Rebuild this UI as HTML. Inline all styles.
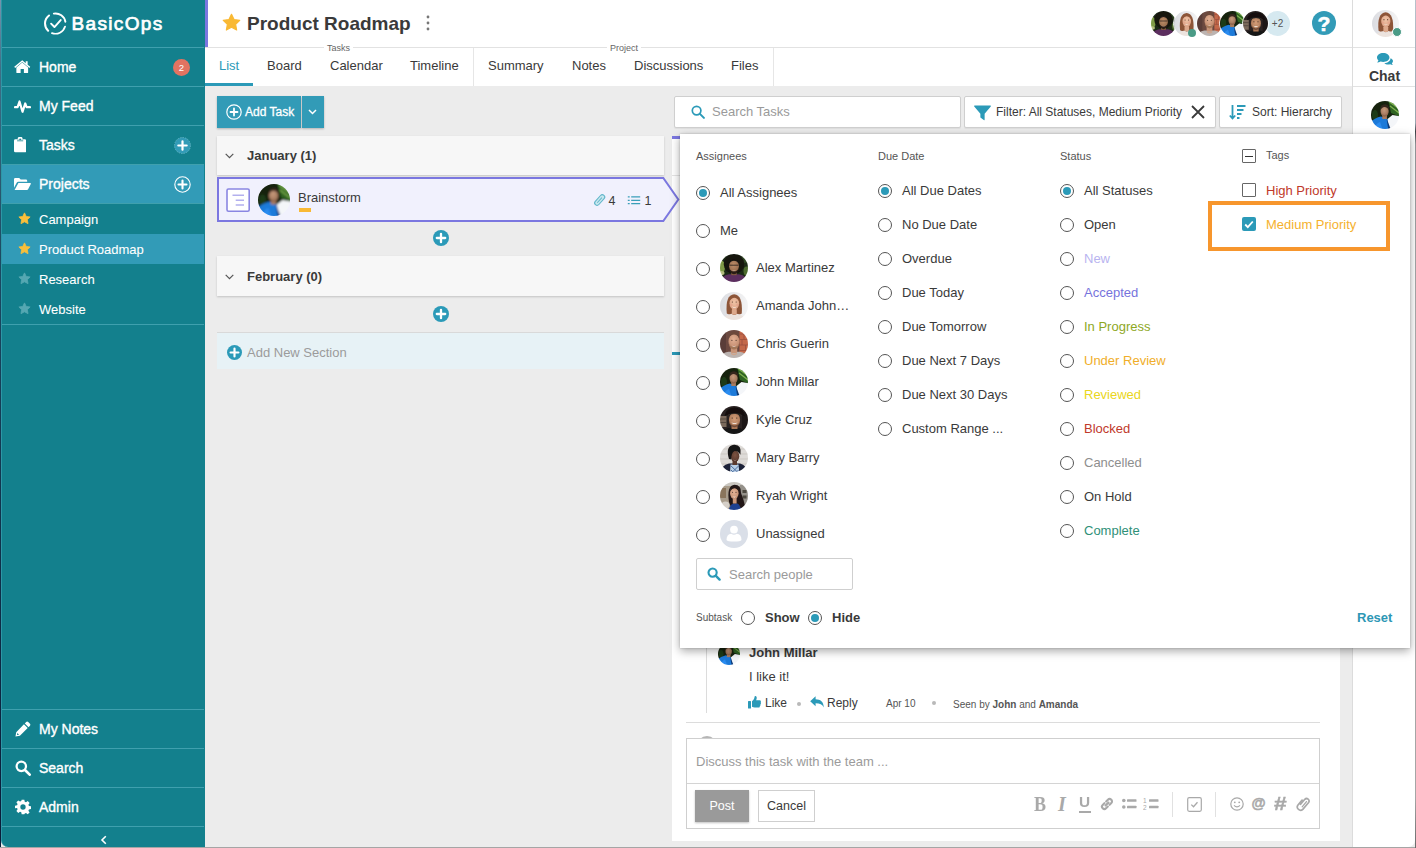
<!DOCTYPE html>
<html lang="en">
<head>
<meta charset="utf-8">
<title>BasicOps - Product Roadmap</title>
<style>
*{box-sizing:border-box;margin:0;padding:0}
html,body{width:1416px;height:848px;overflow:hidden;background:#ececec;font-family:"Liberation Sans",Arial,Helvetica,sans-serif;color:#3c3c3c;font-size:13px}
.abs{position:absolute}
#app{position:absolute;left:0;top:0;width:1416px;height:848px;overflow:hidden;background:#ececec}
/* ---------- sidebar ---------- */
#side{position:absolute;left:1px;top:0;width:204px;height:847px;background:#13808d;border-left:1px solid #2d97a6;border-bottom-left-radius:7px;color:#fff}
#side .row{position:absolute;left:0;width:202px;height:39px;border-top:1px solid #3fa0ae;font-size:14px;line-height:38px;padding-left:37px;-webkit-text-stroke:.35px #fff}
#side .row svg{position:absolute;left:12px;top:10px}
#side .row.act{background:#329bb7}
#side .sub{position:absolute;left:0;width:202px;height:30px;font-size:13px;line-height:32px;padding-left:37px;-webkit-text-stroke:.08px #fff}
#side .sub.act{background:#329bb7}
#side .sub svg{position:absolute;left:16px;top:8px;width:13px;height:13px}
#side .hr{position:absolute;left:0;width:202px;height:1px;background:#3fa0ae}
/* ---------- header ---------- */
#head{position:absolute;left:205px;top:0;width:1147px;height:47px;background:#fff;border-left:3px solid #7b77e0}
#tabs{position:absolute;left:205px;top:47px;width:1147px;height:39px;background:#fff;border-top:1px solid #e2e2e2}
.tab{position:absolute;top:10px;font-size:13px;line-height:16px;color:#3a3a3a;white-space:nowrap}
.grp{position:absolute;top:-4px;font-size:9px;line-height:9px;color:#666;background:#fff;padding:0 3px}
/* ---------- right column ---------- */
#right{position:absolute;left:1352px;top:0;width:63px;height:847px;background:#fff;border-left:1px solid #dcdcdc;border-bottom-right-radius:7px}
/* ---------- generic ---------- */
.ibox{position:absolute;background:#fff;border:1px solid #cfcfcf;border-radius:2px;height:32px;top:96px;font-size:12px;line-height:31px;white-space:nowrap;box-shadow:0 1px 1px rgba(0,0,0,.06)}
.sec{position:absolute;left:217px;width:447px;background:#f7f7f7;box-shadow:0 1px 2px rgba(0,0,0,.18);font-weight:bold;font-size:13px;color:#3a3a3a}
.plus{position:absolute;width:16px;height:16px}
/* ---------- popup ---------- */
#pop{position:absolute;left:680px;top:134px;width:730px;height:514px;background:#fff;box-shadow:0 3px 9px rgba(0,0,0,.35),0 0 2px rgba(0,0,0,.2)}
.rd{position:absolute;width:14px;height:14px;border:1px solid #555;border-radius:50%;background:#fff}
.rd.on:after{content:"";position:absolute;left:2px;top:2px;width:8px;height:8px;border-radius:50%;background:#2b9ab8}
.lb{position:absolute;font-size:13px;line-height:16px;white-space:nowrap;color:#3a3a3a}
.hd{position:absolute;font-size:11px;line-height:12px;color:#555;white-space:nowrap}
.av{position:absolute;border-radius:50%;overflow:hidden}
.cb{position:absolute;width:14px;height:14px;border:1px solid #666;background:#fff;border-radius:1px}
</style>
</head>
<body>
<div id="app">
<!-- SVG defs -->
<svg width="0" height="0" style="position:absolute">
<defs>
<filter id="bl" x="-10%" y="-10%" width="120%" height="120%"><feGaussianBlur stdDeviation=".7"/></filter>
<filter id="bl2" x="-10%" y="-10%" width="120%" height="120%"><feGaussianBlur stdDeviation=".35"/></filter>
<linearGradient id="gAm" x1="0" x2="1" y1="0" y2="0"><stop offset="0" stop-color="#d9dadf"/><stop offset="1" stop-color="#f6f6f6"/></linearGradient>
<radialGradient id="gF1" cx=".45" cy=".4" r=".7"><stop offset="0" stop-color="#bd8e69"/><stop offset="1" stop-color="#8f6446"/></radialGradient>
<radialGradient id="gF2" cx=".5" cy=".4" r=".7"><stop offset="0" stop-color="#f0c3a6"/><stop offset="1" stop-color="#d99f82"/></radialGradient>
<radialGradient id="gF3" cx=".45" cy=".35" r=".75"><stop offset="0" stop-color="#e3b094"/><stop offset="1" stop-color="#b98164"/></radialGradient>
<radialGradient id="gF4" cx=".45" cy=".4" r=".7"><stop offset="0" stop-color="#c79a7c"/><stop offset="1" stop-color="#94694f"/></radialGradient>
<radialGradient id="gF5" cx=".5" cy=".45" r=".7"><stop offset="0" stop-color="#d49d78"/><stop offset="1" stop-color="#a06f50"/></radialGradient>
<radialGradient id="gF6" cx=".5" cy=".4" r=".7"><stop offset="0" stop-color="#7d5441"/><stop offset="1" stop-color="#50332a"/></radialGradient>
<radialGradient id="gF7" cx=".45" cy=".4" r=".7"><stop offset="0" stop-color="#e6b497"/><stop offset="1" stop-color="#bf8a6d"/></radialGradient>
<symbol id="av-alex" viewBox="0 0 28 28"><g filter="url(#bl)"><rect x="-2" y="-2" width="32" height="32" fill="#1e2a17"/><ellipse cx="1.500" cy="13" rx="3.600" ry="6.500" fill="#7f9b46"/><ellipse cx="1.500" cy="19" rx="3" ry="2" fill="#b4bd80"/><ellipse cx="26.500" cy="17" rx="3" ry="4.500" fill="#4e6b2f"/><ellipse cx="25" cy="5" rx="4" ry="4" fill="#2f4422"/><ellipse cx="14" cy="10" rx="10.300" ry="9.800" fill="#14120f"/><path d="M-1 30Q1 21.500 9 20.300L19 20.300Q27 21.500 29 30z" fill="#5c2e5f"/><rect x="11.300" y="16" width="5.400" height="5.200" fill="#83593f"/><ellipse cx="14" cy="12.300" rx="4.900" ry="6.400" fill="url(#gF1)"/><path d="M9.200 13.500q.6 6.300 4.800 6.800 4.200-.5 4.800-6.800-1.200 3.500-2.800 3.700h-4q-1.600-.2-2.800-3.700z" fill="#2b1e17"/><path d="M11.800 16.100q2.200 1.400 4.400 0-2.200 2.100-4.400 0z" fill="#e9ddd4"/><path d="M9.600 11.200h8.800" stroke="#33261f" stroke-width=".9"/><path d="M9.300 9Q14 4.500 18.700 9 17 5.500 14 5.500T9.300 9z" fill="#14120f"/></g></symbol>
<symbol id="av-amanda" viewBox="0 0 28 28"><g filter="url(#bl)"><rect x="-2" y="-2" width="32" height="32" fill="url(#gAm)"/><path d="M6.800 21.500Q5 3 14.200 2.300 23 3 21.800 21.500l-3 1.500-9 0z" fill="#8d5539"/><path d="M2.500 30q1.500-7.500 9.500-8.300l2.200 2 2.500-2q8 .8 9.300 8.300z" fill="#ece3de"/><rect x="11.800" y="16.500" width="5" height="6.300" rx="1.500" fill="#dda98c"/><ellipse cx="14.300" cy="11.300" rx="4.800" ry="6.400" fill="url(#gF2)"/><path d="M11.800 14.300q2.500 1.900 5 0-2.500 3-5 0z" fill="#fff"/><path d="M9.300 9.500Q10.500 4 14.300 4t5 5.500Q17 5.800 14.300 5.800T9.300 9.500z" fill="#8d5539"/><circle cx="12.400" cy="10" r=".6" fill="#5a3a2c"/><circle cx="16.200" cy="10" r=".6" fill="#5a3a2c"/><ellipse cx="11.300" cy="13" rx="1.200" ry=".9" fill="#e89f8a" opacity=".6"/><ellipse cx="17.300" cy="13" rx="1.200" ry=".9" fill="#e89f8a" opacity=".6"/></g></symbol>
<symbol id="av-chris" viewBox="0 0 28 28"><g filter="url(#bl)"><rect x="-2" y="-2" width="32" height="32" fill="#6c4a41"/><rect x="-2" y="-2" width="8" height="32" fill="#5a3d37"/><rect x="19.500" y="-2" width="11" height="32" fill="#c4684a"/><path d="M19.500 4h10M19.500 9.500h10M19.500 15h10M19.500 20.500h10M24 4v5.500M22 9.500V15M25.500 15v5.500" stroke="#9a4f3c" stroke-width=".8"/><path d="M-1 30q2-7.500 9.500-8.200h11q7.500.7 9.500 8.200z" fill="#bcb4b1"/><rect x="10.800" y="17" width="6.400" height="6" rx="1.500" fill="#c89478"/><path d="M11 22.500q3 2.500 6 0l0 1.500q-3 2.500-6 0z" fill="#cfa58c"/><ellipse cx="14" cy="11.500" rx="5.500" ry="7.500" fill="url(#gF3)"/><path d="M8.700 8Q9.500 1.800 14 1.800T19.300 8Q17.500 4.500 14 4.500T8.700 8z" fill="#6d4a3a"/><path d="M8.800 13q.6 6 5.200 6.500 4.600-.5 5.200-6.500-1.300 3.300-3 3.500h-4.400q-1.700-.2-3-3.500z" fill="#a47759"/><path d="M11.800 15.600q2.200 1.500 4.400 0-2.200 2.400-4.400 0z" fill="#f6eee8"/><circle cx="11.900" cy="10.300" r=".6" fill="#4a342a"/><circle cx="16.100" cy="10.300" r=".6" fill="#4a342a"/></g></symbol>
<symbol id="av-john" viewBox="0 0 28 28"><g filter="url(#bl)"><rect x="-2" y="-2" width="32" height="32" fill="#142410"/><path d="M17 -2h13v18l-10-4z" fill="#2f6323"/><path d="M18.500 1l10 7M21 -1l8 5M19 5l9 7" stroke="#7fb24f" stroke-width="1.300"/><ellipse cx="4" cy="14" rx="3" ry="5" fill="#1d3a17"/><path d="M-2 30V22Q4 16.500 10 15.500l6.500 2.500 3 12z" fill="#1f7ad9"/><path d="M2 30q2-7 7-9l3 9z" fill="#2c8cf0"/><path d="M16.500 18l5-4 8.500 1.500v9L23 30h-4.500z" fill="#f4f6f9"/><path d="M15.500 17.500l2 12.500h3z" fill="#0e3a78"/><rect x="11.300" y="13.500" width="4.600" height="4.500" fill="#a87b60"/><ellipse cx="13.600" cy="10" rx="4.100" ry="5.600" fill="url(#gF4)"/><path d="M9.300 9.500Q9 3.300 13.800 3.300T18 9.500Q16.500 6 13.600 6T9.300 9.500z" fill="#35261d"/><path d="M10 11.500q.8 4 3.600 4.200 2.800-.2 3.600-4.200-1.200 2.500-3.600 2.600-2.400-.1-3.600-2.600z" fill="#8a6048" opacity=".7"/></g></symbol>
<symbol id="av-kyle" viewBox="0 0 28 28"><g filter="url(#bl)"><rect x="-2" y="-2" width="32" height="32" fill="#2a2220"/><rect x="-2" y="10" width="8.500" height="11" fill="#7b6b5c"/><path d="M-2 13h8.500M-2 16.500h8.500" stroke="#4d4138" stroke-width=".8"/><rect x="22" y="6" width="8" height="24" fill="#1d1817"/><path d="M-1 30q3-7 10-8h10q7 1 10 8z" fill="#171312"/><rect x="11.500" y="18" width="6" height="5" fill="#a97553"/><ellipse cx="14.500" cy="13.800" rx="5.600" ry="7.200" fill="url(#gF5)"/><path d="M4.500 10Q6 1.300 15 1.500T25 10.500Q15 5.300 4.500 10z" fill="#121010"/><path d="M8 9.200Q15 5.500 22 9.500" stroke="#3a302c" stroke-width=".7" fill="none"/><path d="M11.300 16.200q3.200 2 6.400 0-3.200 3.800-6.400 0z" fill="#fdf9f5"/><path d="M9.200 15.500q.8 5.500 5.300 5.800 4.500-.3 5.300-5.800-1.500 3.800-5.300 4-3.800-.2-5.300-4z" fill="#5f3f2e" opacity=".8"/><circle cx="12.200" cy="12" r=".6" fill="#2a1d17"/><circle cx="16.800" cy="12" r=".6" fill="#2a1d17"/></g></symbol>
<symbol id="av-mary" viewBox="0 0 28 28"><g filter="url(#bl)"><rect x="-2" y="-2" width="32" height="32" fill="#dedbd8"/><path d="M-2 5h32M-2 10h32M-2 15h32M-2 20h32" stroke="#c6c1bc" stroke-width=".7"/><path d="M0 30q1-9 9-10.500h11q7 1.500 8 10.500z" fill="#1f2238"/><path d="M10.500 20.500h8l1 9.500h-9.500z" fill="#b9cfe6"/><path d="M11 22l7.500 7M18.500 22l-7 7M11 26l4 4M18.500 26l-4 4" stroke="#34588f" stroke-width=".8"/><rect x="12.500" y="16.500" width="4.500" height="4.500" fill="#5c3a2d"/><ellipse cx="15" cy="12.300" rx="4.300" ry="5.700" fill="url(#gF6)"/><path d="M9 15Q5 2 14 .8q8-.5 6.500 10Q18 6.500 14.500 7 11 9 11.300 15.500z" fill="#181413"/><path d="M13.300 15.400q1.700 1.100 3.400 0-1.700 1.700-3.400 0z" fill="#e6dbd4"/></g></symbol>
<symbol id="av-ryah" viewBox="0 0 28 28"><g filter="url(#bl)"><rect x="-2" y="-2" width="32" height="32" fill="#a99d8c"/><rect x="-2" y="-2" width="32" height="6" fill="#c9c6c0"/><rect x="20" y="3" width="10" height="27" fill="#95918a"/><path d="M22.500 8h4v3h-4zM22.500 13.500h4v3h-4z" fill="#4d483f"/><rect x="-2" y="6" width="8" height="10" fill="#8a755c"/><ellipse cx="5.500" cy="23" rx="4" ry="3.500" fill="#d5cfc8"/><path d="M9 20Q6.500 3.500 14.500 2.800 21.500 3 21 11q3 7 4.500 15l-9 2-6-4z" fill="#221917"/><path d="M8.500 30q.5-7 5-8.500h4q3 1.500 4 8.500z" fill="#1f3f90"/><rect x="12.800" y="16" width="3.800" height="5.500" fill="#c99679"/><ellipse cx="14.300" cy="11.300" rx="4.300" ry="5.600" fill="url(#gF7)"/><path d="M10 9.500Q11 4.300 14.500 4.300T19 10Q17 6.300 14.500 6.300T10 9.500z" fill="#221917"/><path d="M12.200 14q2.100 1.700 4.200 0-2.100 2.800-4.200 0z" fill="#fff"/><circle cx="12.600" cy="10.300" r=".55" fill="#3a2a22"/><circle cx="16" cy="10.300" r=".55" fill="#3a2a22"/></g></symbol>
<symbol id="av-none" viewBox="0 0 28 28"><rect width="28" height="28" fill="#dadfe8"/><g filter="url(#bl2)"><circle cx="14" cy="9.600" r="3.900" fill="#fff"/><path d="M6.500 20q0-5.800 4.800-6.300 2.700 1.900 5.400 0 4.800.5 4.800 6.300-1 1.600-7.500 1.600T6.500 20z" fill="#fff"/></g></symbol>
<symbol id="star" viewBox="0 0 24 24"><path d="M12 1.6l3.2 6.6 7.2 1-5.2 5.1 1.3 7.2L12 18.1l-6.500 3.400 1.300-7.200L1.600 9.200l7.200-1z" stroke-linejoin="round" stroke-width="1.5" stroke="currentColor" fill="currentColor"/></symbol>
<symbol id="plusc" viewBox="0 0 16 16"><circle cx="8" cy="8" r="8" fill="#2b9ab8"/><path d="M8 3.800v8.400M3.800 8h8.400" stroke="#fff" stroke-width="2.300" stroke-linecap="round"/></symbol>
</defs>
</svg>

<div class="abs" style="left:0;top:0;width:1px;height:848px;background:linear-gradient(180deg,#7893ad 0,#3f6f86 8%,#1d4a63 30%,#12344d 60%,#0b1b38 100%)"></div>
<!-- SIDEBAR -->
<div id="side">
  <div class="abs" id="logo" style="left:0;top:0;width:203px;height:47px">
    <svg class="abs" style="left:42px;top:11.500px" width="23" height="23" viewBox="0 0 24 24" fill="none" stroke="#fff" stroke-linecap="round">
      <path d="M5.200 3.600A10.600 10.600 0 0 0 4.300 19.600" stroke-width="2.100"/>
      <path d="M10.300 1.700A10.400 10.400 0 0 1 22.300 10.200" stroke-width="2"/>
      <path d="M22 15.200A10.500 10.500 0 0 1 8.300 22" stroke-width="1.800"/>
      <path d="M7.400 12.200l3.500 3.500 6.500-7.300" stroke-width="2" stroke-linejoin="round"/>
    </svg>
    <div class="abs" id="brand" style="left:69.500px;top:10.500px;font-size:19px;line-height:26px;letter-spacing:1.350px;-webkit-text-stroke:.7px #fff;white-space:nowrap">BasicOps</div>
  </div>
  <div class="row" style="top:47px" id="r-home"><svg width="16.500" height="13.500" viewBox="0 0 17 14" style="left:12px;top:11.500px" fill="#fff"><path d="M8.500 2.700L2.400 7.700V13a.5.5 0 0 0 .5.5h3.900V9.400h3.400v4.100h3.900a.5.500 0 0 0 .5-.5V7.700z"/><path d="M8.500.3L.2 7.100l.9 1.100 7.400-6.100 7.400 6.100.9-1.100-2.700-2.200V1.200h-2v2.100z"/></svg>Home<span class="abs" style="left:171px;top:11px;width:17px;height:17px;border-radius:50%;background:#e27361;font-size:9.500px;line-height:17px;text-align:center;-webkit-text-stroke:0">2</span></div>
  <div class="row" style="top:86px" id="r-feed"><svg width="17" height="13" viewBox="0 0 17 13" style="left:12px;top:13px" fill="none" stroke="#fff" stroke-width="2.200" stroke-linejoin="round" stroke-linecap="round"><path d="M1 7.200h2.600l1.900-5.700 3 10.300 2.700-8.300 1.400 3.700h3.400"/></svg>My Feed</div>
  <div class="row" style="top:125px" id="r-tasks"><svg width="12.300" height="15.500" viewBox="0 0 13 16" style="left:12px;top:11px" fill="#fff"><path d="M1.500 2.200h2.300a2.700 2.700 0 0 1 5.400 0h2.300A1.500 1.500 0 0 1 13 3.700v10.800a1.500 1.500 0 0 1-1.500 1.500h-10A1.500 1.500 0 0 1 0 14.500V3.700a1.500 1.500 0 0 1 1.500-1.500zM6.500 1.300a.9.900 0 1 0 0 1.800.9.900 0 0 0 0-1.800z"/><rect x="3.300" y="2.500" width="6.400" height="2" fill="#13808d" opacity=".55"/></svg>Tasks<svg width="17" height="17" viewBox="0 0 17 17" style="left:172px;top:11px"><circle cx="8.500" cy="8.500" r="8" fill="#329bb7" stroke="#6ab7c7" stroke-width=".8" stroke-dasharray="1.500 1"/><path d="M8.500 4.300v8.400M4.300 8.500h8.400" stroke="#fff" stroke-width="2.200" stroke-linecap="round"/></svg></div>
  <div class="row act" style="top:164px" id="r-proj"><svg width="17" height="12" viewBox="0 0 17 12" style="left:12px;top:13px" fill="#fff"><path d="M0 1.300A1.300 1.300 0 0 1 1.300 0h3.900l1.500 1.500h5.200a1.300 1.300 0 0 1 1.300 1.300v1H4.300a1.800 1.800 0 0 0-1.600 1L0 9.700z"/><path d="M4.400 5h11.900a.6.600 0 0 1 .5.900l-2.700 5.300a1.300 1.300 0 0 1-1.200.8H.6z"/></svg>Projects<svg width="17" height="17" viewBox="0 0 17 17" style="left:172px;top:11px"><circle cx="8.500" cy="8.500" r="7.700" fill="none" stroke="#fff" stroke-width="1.100"/><path d="M8.500 4.500v8M4.500 8.500h8" stroke="#fff" stroke-width="2.100" stroke-linecap="round"/></svg></div>
  <div class="hr" style="top:203px"></div>
  <div class="sub" style="top:204px"><svg width="12" height="12" style="color:#f9bf3b"><use href="#star"/></svg>Campaign</div>
  <div class="sub act" style="top:234px"><svg width="12" height="12" style="color:#f9bf3b"><use href="#star"/></svg>Product Roadmap</div>
  <div class="sub" style="top:264px"><svg width="12" height="12" style="color:#55a7b2"><use href="#star"/></svg>Research</div>
  <div class="sub" style="top:294px"><svg width="12" height="12" style="color:#55a7b2"><use href="#star"/></svg>Website</div>
  <div class="hr" style="top:324px"></div>
  <div class="row" style="top:709px" id="r-notes"><svg width="16" height="16" viewBox="0 0 17 17" style="left:13px;top:11px" fill="#fff"><path d="M11.900 1.100a1.500 1.500 0 0 1 2.100 0l1.900 1.900a1.500 1.500 0 0 1 0 2.100l-1.500 1.500-4-4z"/><path d="M9.500 3.500l4 4-8.300 8.300-4.700.8.800-4.700zM2.500 12.700l-.4 2.200 2.200-.4z" fill-rule="evenodd"/></svg>My Notes</div>
  <div class="row" style="top:748px" id="r-search"><svg width="16" height="16" viewBox="0 0 17 17" style="left:13px;top:11px" fill="none" stroke="#fff"><circle cx="6.700" cy="6.700" r="5" stroke-width="2.400"/><path d="M10.600 10.600l5 5" stroke-width="2.800" stroke-linecap="round"/></svg>Search</div>
  <div class="row" style="top:787px" id="r-admin"><svg width="16" height="16" viewBox="0 0 24 24" style="left:13px;top:11px" fill="#fff"><path fill-rule="evenodd" d="M10 1h4l.6 3.100 1.900.8 2.600-1.800 2.800 2.800-1.800 2.600.8 1.900 3.100.6v4l-3.100.6-.8 1.900 1.800 2.600-2.800 2.800-2.600-1.800-1.900.8L14 23h-4l-.6-3.100-1.900-.8-2.600 1.800-2.800-2.800 1.800-2.600-.8-1.900L0 14v-4l3.100-.6.800-1.900-1.800-2.600 2.800-2.800 2.600 1.800 1.900-.8zM12 8a4 4 0 1 0 0 8 4 4 0 0 0 0-8z"/></svg>Admin</div>
  <div class="hr" style="top:826px"></div>
  <svg class="abs" style="left:98px;top:835px" width="8" height="10" viewBox="0 0 8 10" fill="none" stroke="#fff" stroke-width="1.600"><path d="M5.800 1.200L2 5l3.800 3.800"/></svg>
</div>

<!-- HEADER -->
<div id="head">
  <svg class="abs" style="left:14px;top:13px;color:#f9b934" width="19" height="19"><use href="#star"/></svg>
  <div class="av" style="left:941.5px;top:10px;width:27px;height:27px;border:1px solid #fff;z-index:1"><svg width="25" height="25" viewBox="0 0 28 28"><use href="#av-alex"/></svg></div>
  <div class="av" style="left:964.5px;top:10px;width:27px;height:27px;border:1px solid #fff;z-index:2"><svg width="25" height="25" viewBox="0 0 28 28"><use href="#av-amanda"/></svg></div>
  <div class="av" style="left:987.5px;top:10px;width:27px;height:27px;border:1px solid #fff;z-index:3"><svg width="25" height="25" viewBox="0 0 28 28"><use href="#av-chris"/></svg></div>
  <div class="av" style="left:1010.5px;top:10px;width:27px;height:27px;border:1px solid #fff;z-index:4"><svg width="25" height="25" viewBox="0 0 28 28"><use href="#av-john"/></svg></div>
  <div class="av" style="left:1033.5px;top:10px;width:27px;height:27px;border:1px solid #fff;z-index:5"><svg width="25" height="25" viewBox="0 0 28 28"><use href="#av-kyle"/></svg></div>
  <div class="abs" style="left:1057.0px;top:11px;width:25px;height:25px;border-radius:50%;background:#d6e9f0;color:#555;font-size:10px;line-height:26px;text-align:center">+2</div>
  <div class="abs" style="left:980px;top:29px;width:8px;height:8px;border-radius:50%;background:#4a9b86;z-index:9"></div>
  <div class="abs" style="left:1104px;top:11px;width:24px;height:24px;border-radius:50%;background:#329bb7;color:#fff;font-size:21px;line-height:25px;-webkit-text-stroke:.6px #fff;font-weight:bold;text-align:center">?</div>
  <svg class="abs" style="left:217.500px;top:15px" width="4" height="16" viewBox="0 0 4 16" fill="#777"><circle cx="2" cy="2" r="1.400"/><circle cx="2" cy="8" r="1.400"/><circle cx="2" cy="14" r="1.400"/></svg>
  <div class="abs" id="title" style="left:39px;top:12px;font-size:19px;line-height:24px;font-weight:bold;color:#3a3a3a;white-space:nowrap">Product Roadmap</div>
</div>
<div id="tabs">
  <div class="grp" style="left:119px">Tasks</div>
  <div class="grp" style="left:402px">Project</div>
  <div class="tab" style="left:14px;color:#2b9ab8">List</div>
  <div class="tab" style="left:62px">Board</div>
  <div class="tab" style="left:125px">Calendar</div>
  <div class="tab" style="left:205px">Timeline</div>
  <div class="tab" style="left:283px">Summary</div>
  <div class="tab" style="left:367px">Notes</div>
  <div class="tab" style="left:429px">Discussions</div>
  <div class="tab" style="left:526px">Files</div>
  <div class="abs" style="left:0;top:35px;width:48px;height:3px;background:#2b9ab8"></div>
  <div class="abs" style="left:268px;top:0;width:1px;height:38px;background:#e6e6e6"></div>
  <div class="abs" style="left:568px;top:0;width:1px;height:38px;background:#e6e6e6"></div>
</div>

<!-- RIGHT COLUMN -->
<div id="right">
  <div class="av" style="left:19px;top:10px;width:27px;height:27px"><svg width="27" height="27" viewBox="0 0 28 28"><use href="#av-amanda"/></svg></div>
  <div class="abs" style="left:39px;top:27px;width:10px;height:10px;border-radius:50%;background:#4a9b86;border:1px solid #fff"></div>
  <div class="abs" style="left:0;top:47px;width:63px;height:1px;background:#e2e2e2"></div>
  <svg class="abs" style="left:24px;top:53px" width="16" height="12.500" viewBox="0 0 18 14" fill="#2b9ab8"><path d="M7 0C3.100 0 0 2.200 0 5c0 1.200.6 2.300 1.600 3.200C1.300 9.200.7 10 .1 10.600c1.400 0 2.800-.4 3.900-1.100 1 .3 2 .5 3 .5 3.900 0 7-2.200 7-5S10.900 0 7 0z"/><path d="M15.200 5.800c0 2.900-3 5.300-7 5.600 1 .9 2.600 1.500 4.300 1.500.8 0 1.600-.1 2.300-.4 1 .6 2 .9 3.100 1-.5-.5-.9-1.200-1.200-2 .8-.7 1.300-1.600 1.300-2.500 0-1.300-1.100-2.500-2.800-3.200z"/></svg>
  <div class="abs" style="left:0;top:67px;width:63px;text-align:center;font-size:14px;line-height:18px;font-weight:bold;color:#3a3a3a">Chat</div>
  <div class="abs" style="left:0;top:86px;width:63px;height:1px;background:#e2e2e2"></div>
  <div class="av" style="left:18px;top:101px;width:28px;height:28px"><svg width="28" height="28" viewBox="0 0 28 28"><use href="#av-john"/></svg></div>
</div>

<!-- MAIN placeholder -->
<div id="main">
  <!-- Add Task -->
  <div class="abs" style="left:217px;top:96px;width:84px;height:32px;background:#329bb7;box-shadow:0 1px 2px rgba(0,0,0,.25);color:#fff;font-size:12px;line-height:32px;padding-left:28px;-webkit-text-stroke:.3px #fff;white-space:nowrap">
    <svg class="abs" style="left:9px;top:8px" width="16" height="16" viewBox="0 0 16 16" fill="none" stroke="#fff"><circle cx="8" cy="8" r="7.200" stroke-width="1.200"/><path d="M8 4.500v7M4.500 8h7" stroke-width="1.800" stroke-linecap="round"/></svg>Add Task</div>
  <div class="abs" style="left:302px;top:96px;width:22px;height:32px;background:#329bb7;box-shadow:0 1px 2px rgba(0,0,0,.25)">
    <svg class="abs" style="left:6px;top:13px" width="9" height="6" viewBox="0 0 9 6" fill="none" stroke="#fff" stroke-width="1.500"><path d="M1 1l3.500 3.500L8 1"/></svg></div>

  <!-- search / filter / sort -->
  <div class="ibox" style="left:674px;width:287px;color:#9a9a9a;padding-left:37px;font-size:13px;line-height:29px">
    <svg class="abs" style="left:16px;top:8px" width="14" height="14" viewBox="0 0 14 14" fill="none" stroke="#2b9ab8"><circle cx="5.600" cy="5.600" r="4.300" stroke-width="1.700"/><path d="M8.900 8.900l4 4" stroke-width="2" stroke-linecap="round"/></svg>Search Tasks</div>
  <div class="ibox" style="left:964px;width:252px;color:#3a3a3a;padding-left:31px">
    <svg class="abs" style="left:8.500px;top:7.500px" width="17" height="17" viewBox="0 0 16 16" fill="#2b9ab8"><path d="M.6.500h14.800a.5.500 0 0 1 .4.800L10 8.200v5.600a.5.500 0 0 1-.8.400l-2.900-2.100a.6.600 0 0 1-.3-.5V8.200L.2 1.300A.5.500 0 0 1 .6.500z"/></svg>Filter: All Statuses, Medium Priority
    <svg class="abs" style="left:226px;top:8px" width="14" height="14" viewBox="0 0 14 14" fill="none" stroke="#3a3a3a" stroke-width="1.800"><path d="M1 1l12 12M13 1L1 13"/></svg></div>
  <div class="ibox" style="left:1219px;width:123px;color:#3a3a3a;padding-left:32px">
    <svg class="abs" style="left:9px;top:7px" width="17" height="17" viewBox="0 0 17 17" fill="none" stroke="#2b9ab8" stroke-width="1.700"><path d="M3.500 1v13.500M.8 11.500l2.700 3 2.700-3" stroke-width="1.800"/><path d="M8 2h8.500M8 6h6.500M8 10h4.500M8 14h2.500" stroke-width="2"/></svg>Sort: Hierarchy</div>

  <!-- details panel -->
  <div class="abs" id="det" style="left:672px;top:136px;width:668px;height:705px;background:#fff;border-top:3px solid #7b77e0;overflow:hidden">
    <div class="abs" style="left:0;top:36px;width:668px;height:1px;background:#e4e4e4"></div>
    <div class="abs" style="left:0;top:213px;width:8px;height:3px;background:#2b9ab8"></div>
    <!-- comment -->
    <div class="abs" style="left:34px;top:505px;width:1px;height:69px;background:#dcdcdc"></div>
    <div class="av" style="left:46px;top:504px;width:22px;height:22px"><svg width="22" height="22" viewBox="0 0 28 28"><use href="#av-john"/></svg></div>
    <div class="abs" style="left:77px;top:506px;font-size:13px;line-height:16px;font-weight:bold;color:#3a3a3a">John Millar</div>
    <div class="abs" style="left:77px;top:530px;font-size:13px;line-height:16px;color:#3a3a3a">I like it!</div>
    <svg class="abs" style="left:76px;top:556px" width="14" height="14" viewBox="0 0 14 14" fill="#2b9ab8"><rect x="0" y="6" width="3" height="7.500" rx=".5"/><path d="M4 6.300c1.600-1 2.400-2.700 2.600-4.700.1-.9 1.700-.8 2 .4.300 1.100 0 2.300-.5 3.300h3.600c1.200 0 1.600 1.200 1 2 .6.600.4 1.600-.3 1.900.4.700.1 1.500-.6 1.800.2.900-.3 1.600-1.300 1.600H6.700c-1 0-1.800-.4-2.700-.8z"/></svg>
    <div class="abs" style="left:93px;top:556px;font-size:12px;line-height:16px;color:#3a3a3a">Like</div>
    <div class="abs" style="left:125px;top:563px;width:4px;height:4px;border-radius:50%;background:#b9b9b9"></div>
    <svg class="abs" style="left:138px;top:557px" width="14" height="12" viewBox="0 0 14 12" fill="#2b9ab8"><path d="M5.600.3v2.900c4.800.1 8 2.300 8.200 8.300-1.400-3-3.800-4.200-8.200-4.200v3L.2 5.300z"/></svg>
    <div class="abs" style="left:155px;top:556px;font-size:12px;line-height:16px;color:#3a3a3a">Reply</div>
    <div class="abs" style="left:214px;top:558px;font-size:10px;line-height:14px;color:#555">Apr 10</div>
    <div class="abs" style="left:260px;top:562px;width:4px;height:4px;border-radius:50%;background:#b9b9b9"></div>
    <div class="abs" style="left:281px;top:559px;font-size:10px;line-height:14px;color:#555;white-space:nowrap">Seen by <b>John</b> and <b>Amanda</b></div>
    <div class="abs" style="left:14px;top:583px;width:634px;height:1px;background:#dcdcdc"></div>
    <div class="abs" style="left:25px;top:597px;width:20px;height:20px;border-radius:50%;background:#b5b5b5"></div>
    <!-- editor -->
    <div class="abs" style="left:14px;top:599px;width:634px;height:91px;background:#fff;border:1px solid #cfcfcf">
      <div class="abs" style="left:9px;top:15px;font-size:13px;line-height:16px;color:#9b9b9b;white-space:nowrap">Discuss this task with the team ...</div>
      <div class="abs" style="left:0;top:44px;width:632px;height:1px;background:#d4d4d4"></div>
      <div class="abs" style="left:8px;top:51px;width:54px;height:32px;background:#9a9a9a;color:#fff;font-size:12.500px;line-height:33px;text-align:center;box-shadow:0 1px 2px rgba(0,0,0,.25)">Post</div>
      <div class="abs" style="left:71px;top:51px;width:57px;height:32px;background:#fff;border:1px solid #cfcfcf;color:#3a3a3a;font-size:12.500px;line-height:31px;text-align:center">Cancel</div>
      <div id="tools" style="color:#a9a9a9">
        <div class="abs" style="left:347px;top:54px;font-family:'Liberation Serif',serif;font-weight:bold;font-size:20px;line-height:22px;transform:scaleX(.9);transform-origin:0 0">B</div>
        <div class="abs" style="left:371px;top:54px;font-family:'Liberation Serif',serif;font-style:italic;font-weight:bold;font-size:20px;line-height:22px">I</div>
        <div class="abs" style="left:392px;top:52px;font-size:14px;line-height:22px;font-weight:bold;transform:scaleX(1.1);transform-origin:0 0">U</div>
        <div class="abs" style="left:391.500px;top:72px;width:12.500px;height:1.500px;background:#a9a9a9"></div>
        <svg class="abs" style="left:413px;top:58px" width="14" height="14" viewBox="0 0 14 14" fill="none" stroke="#a9a9a9" stroke-width="2.100" stroke-linecap="round"><path d="M6.200 4.400l1.700-1.700a2.400 2.400 0 0 1 3.400 3.400L9.600 7.800"/><path d="M7.800 9.600l-1.700 1.700a2.400 2.400 0 0 1-3.400-3.400l1.700-1.700"/><path d="M5.500 8.500l3-3"/></svg>
        <svg class="abs" style="left:435px;top:59px" width="15" height="12" viewBox="0 0 15 12" fill="#a9a9a9"><circle cx="1.800" cy="2.500" r="1.800"/><circle cx="1.800" cy="9" r="1.800"/><rect x="5" y="1.200" width="9.500" height="2.600" rx=".6"/><rect x="5" y="7.700" width="9.500" height="2.600" rx=".6"/></svg>
        <svg class="abs" style="left:456px;top:58px" width="16" height="14" viewBox="0 0 16 14" fill="#a9a9a9"><rect x="6" y="2.200" width="9.500" height="2.600" rx=".6"/><rect x="6" y="8.700" width="9.500" height="2.600" rx=".6"/><text x="0" y="5.800" font-size="6.500" font-family="Liberation Sans, sans-serif">1</text><text x="0" y="12.800" font-size="6.500" font-family="Liberation Sans, sans-serif">2</text></svg>
        <div class="abs" style="left:485px;top:53px;width:1px;height:25px;background:#e1e1e1"></div>
        <svg class="abs" style="left:500px;top:58px" width="15" height="15" viewBox="0 0 15 15" fill="none" stroke="#a9a9a9"><rect x=".7" y=".7" width="13.600" height="13.600" rx="1.500" stroke-width="1.200"/><path d="M4.300 7.600l2.200 2.200 4-4.600" stroke-width="1.300"/></svg>
        <div class="abs" style="left:528px;top:53px;width:1px;height:25px;background:#e1e1e1"></div>
        <svg class="abs" style="left:543px;top:58px" width="14" height="14" viewBox="0 0 14 14" fill="none" stroke="#a9a9a9"><circle cx="7" cy="7" r="6.200" stroke-width="1.200"/><path d="M4 8.300q3 3.200 6 0" stroke-width="1.100"/><circle cx="4.800" cy="5.300" r=".9" fill="#a9a9a9" stroke="none"/><circle cx="9.200" cy="5.300" r=".9" fill="#a9a9a9" stroke="none"/></svg>
        <div class="abs" style="left:564.500px;top:54px;font-size:14.500px;line-height:20px;font-weight:bold;-webkit-text-stroke:.5px #a9a9a9">@</div>
        <div class="abs" style="left:587px;top:53.500px;font-size:19px;line-height:22px;font-weight:bold;-webkit-text-stroke:.4px #a9a9a9;transform:scaleX(1.2);transform-origin:0 0">#</div>
        <svg class="abs" style="left:609px;top:57px" width="15" height="16" viewBox="0 0 15 16" fill="none" stroke="#a9a9a9" stroke-width="1.700" stroke-linecap="round" stroke-linejoin="round"><path d="M4.600 8.300l4.200-5a2.500 2.500 0 0 1 3.800 3.200l-5.800 6.900a3.300 3.300 0 0 1-5-4.200l4.300-5.100"/><path d="M6.200 10.800l4.300-5.200" stroke-width="1.300"/></svg>
      </div>
    </div>
  </div>
  <!-- sections -->
  <div class="sec" style="top:136px;height:39px;line-height:39px;padding-left:30px">
    <svg class="abs" style="left:8px;top:17px" width="9" height="6" viewBox="0 0 9 6" fill="none" stroke="#555" stroke-width="1.200"><path d="M.7.800L4.500 4.600 8.300.8"/></svg>January (1)</div>

  <!-- task row -->
  <svg class="abs" style="left:216px;top:176px" width="466" height="47" viewBox="0 0 466 47">
    <path d="M2 2H447.300L462.300 23.500 447.300 45H2z" fill="#f1f1fd" stroke="#7b77e0" stroke-width="2" stroke-linejoin="miter"/>
    <rect x="11" y="13" width="22.200" height="22.200" rx="1.500" fill="#fff" stroke="#8a86e2" stroke-width="1.600"/>
    <path d="M16.500 19.300h11.500M19.700 24.200h8.300M19.700 29h8.300" stroke="#b3b0ee" stroke-width="1.600"/>
    <g transform="translate(383.700,24) rotate(42)"><rect x="-2.400" y="-6.300" width="4.800" height="12.600" rx="2.400" fill="#c9e8ef" stroke="#62b6ca" stroke-width="1.100"/><path d="M0 -3.300v7" stroke="#62b6ca" stroke-width="1"/></g>
    <g stroke="#3a9fb9" stroke-width="1.300"><path d="M415.200 20.800h9M415.200 24.300h9M415.200 27.700h9"/><path d="M411.800 20.800h1.900M411.800 24.300h1.900M411.800 27.700h1.900"/></g>
  </svg>
  <div class="av" style="left:258px;top:184px;width:32px;height:32px"><svg width="32" height="32" viewBox="0 0 28 28"><use href="#av-john"/></svg></div>
  <div class="abs" style="left:298px;top:190px;font-size:13px;line-height:16px;color:#3a3a3a">Brainstorm</div>
  <div class="abs" style="left:299px;top:208px;width:12px;height:4px;background:#f9b934"></div>
  <div class="abs" style="left:608.500px;top:193px;font-size:12.500px;line-height:16px;color:#3a3a3a">4</div>
  <div class="abs" style="left:644.500px;top:193px;font-size:12.500px;line-height:16px;color:#3a3a3a">1</div>

  <svg class="plus" style="left:433px;top:230px"><use href="#plusc"/></svg>

  <div class="sec" style="top:256px;height:40px;line-height:41px;padding-left:30px">
    <svg class="abs" style="left:8px;top:18px" width="9" height="6" viewBox="0 0 9 6" fill="none" stroke="#555" stroke-width="1.200"><path d="M.7.800L4.500 4.600 8.300.8"/></svg>February (0)</div>
  <svg class="plus" style="left:433px;top:306px"><use href="#plusc"/></svg>

  <div class="abs" style="left:217px;top:332px;width:447px;height:37px;background:#e7f2f6;border-top:1px solid #d9d9d9;font-size:13px;line-height:39px;padding-left:30px;color:#9b9b9b">
    <svg class="abs" style="left:10px;top:11.500px" width="15" height="15" viewBox="0 0 16 16"><use href="#plusc"/></svg>Add New Section</div>

</div>

<div class="abs" style="left:0;top:847px;width:1416px;height:1px;background:#a5a5a5;z-index:50"></div>
<div class="abs" style="left:1415px;top:0;width:1px;height:848px;background:linear-gradient(180deg,#b8c2cc 0,#9aa5b0 14.500%,#3a3d42 15.500%,#8f9194 17%,#a6a6a6 40%,#a6a6a6 94%,#6a6a6a 100%);z-index:60"></div>
<!-- POPUP -->
<div id="pop">
  <div class="hd" style="left:16px;top:16px">Assignees</div>
  <div class="hd" style="left:198px;top:16px">Due Date</div>
  <div class="hd" style="left:380px;top:16px">Status</div>
  <div class="hd" style="left:586px;top:15px">Tags</div>
  <div class="rd on" style="left:16.0px;top:52.0px"></div>
  <div class="lb" style="left:40px;top:51px">All Assignees</div>
  <div class="rd" style="left:16.0px;top:90.0px"></div>
  <div class="lb" style="left:40px;top:89px">Me</div>
  <div class="rd" style="left:16.0px;top:128.0px"></div>
  <div class="av" style="left:40px;top:120px;width:28px;height:28px"><svg width="28" height="28" viewBox="0 0 28 28"><use href="#av-alex"/></svg></div>
  <div class="lb" style="left:76px;top:126px">Alex Martinez</div>
  <div class="rd" style="left:16.0px;top:166.0px"></div>
  <div class="av" style="left:40px;top:158px;width:28px;height:28px"><svg width="28" height="28" viewBox="0 0 28 28"><use href="#av-amanda"/></svg></div>
  <div class="lb" style="left:76px;top:164px">Amanda John…</div>
  <div class="rd" style="left:16.0px;top:204.0px"></div>
  <div class="av" style="left:40px;top:196px;width:28px;height:28px"><svg width="28" height="28" viewBox="0 0 28 28"><use href="#av-chris"/></svg></div>
  <div class="lb" style="left:76px;top:202px">Chris Guerin</div>
  <div class="rd" style="left:16.0px;top:242.0px"></div>
  <div class="av" style="left:40px;top:234px;width:28px;height:28px"><svg width="28" height="28" viewBox="0 0 28 28"><use href="#av-john"/></svg></div>
  <div class="lb" style="left:76px;top:240px">John Millar</div>
  <div class="rd" style="left:16.0px;top:280.0px"></div>
  <div class="av" style="left:40px;top:272px;width:28px;height:28px"><svg width="28" height="28" viewBox="0 0 28 28"><use href="#av-kyle"/></svg></div>
  <div class="lb" style="left:76px;top:278px">Kyle Cruz</div>
  <div class="rd" style="left:16.0px;top:318.0px"></div>
  <div class="av" style="left:40px;top:310px;width:28px;height:28px"><svg width="28" height="28" viewBox="0 0 28 28"><use href="#av-mary"/></svg></div>
  <div class="lb" style="left:76px;top:316px">Mary Barry</div>
  <div class="rd" style="left:16.0px;top:356.0px"></div>
  <div class="av" style="left:40px;top:348px;width:28px;height:28px"><svg width="28" height="28" viewBox="0 0 28 28"><use href="#av-ryah"/></svg></div>
  <div class="lb" style="left:76px;top:354px">Ryah Wright</div>
  <div class="rd" style="left:16.0px;top:394.0px"></div>
  <div class="av" style="left:40px;top:386px;width:28px;height:28px"><svg width="28" height="28" viewBox="0 0 28 28"><use href="#av-none"/></svg></div>
  <div class="lb" style="left:76px;top:392px">Unassigned</div>
  <div class="abs" style="left:16px;top:424px;width:157px;height:32px;border:1px solid #cfcfcf;border-radius:2px;font-size:13px;line-height:32px;color:#9a9a9a;padding-left:32px"><svg class="abs" style="left:10px;top:8px" width="14" height="14" viewBox="0 0 14 14" fill="none" stroke="#2b9ab8"><circle cx="5.600" cy="5.600" r="4.100" stroke-width="2.100"/><path d="M8.900 8.900l3.700 3.700" stroke-width="2.400" stroke-linecap="round"/></svg>Search people</div>
  <div class="abs" style="left:16px;top:478px;font-size:10px;line-height:12px;color:#555">Subtask</div>
  <div class="rd" style="left:61.0px;top:477.0px"></div>
  <div class="lb" style="left:85px;top:476px;font-weight:bold">Show</div>
  <div class="rd on" style="left:128.0px;top:477.0px"></div>
  <div class="lb" style="left:152px;top:476px;font-weight:bold">Hide</div>
  <div class="rd on" style="left:198.0px;top:50.0px"></div>
  <div class="lb" style="left:222px;top:49px">All Due Dates</div>
  <div class="rd" style="left:198.0px;top:84.0px"></div>
  <div class="lb" style="left:222px;top:83px">No Due Date</div>
  <div class="rd" style="left:198.0px;top:118.0px"></div>
  <div class="lb" style="left:222px;top:117px">Overdue</div>
  <div class="rd" style="left:198.0px;top:152.0px"></div>
  <div class="lb" style="left:222px;top:151px">Due Today</div>
  <div class="rd" style="left:198.0px;top:186.0px"></div>
  <div class="lb" style="left:222px;top:185px">Due Tomorrow</div>
  <div class="rd" style="left:198.0px;top:220.0px"></div>
  <div class="lb" style="left:222px;top:219px">Due Next 7 Days</div>
  <div class="rd" style="left:198.0px;top:254.0px"></div>
  <div class="lb" style="left:222px;top:253px">Due Next 30 Days</div>
  <div class="rd" style="left:198.0px;top:288.0px"></div>
  <div class="lb" style="left:222px;top:287px">Custom Range ...</div>
  <div class="rd on" style="left:380.0px;top:50.0px"></div>
  <div class="lb" style="left:404px;top:49px">All Statuses</div>
  <div class="rd" style="left:380.0px;top:84.0px"></div>
  <div class="lb" style="left:404px;top:83px">Open</div>
  <div class="rd" style="left:380.0px;top:118.0px"></div>
  <div class="lb" style="left:404px;top:117px;color:#b8b4f0">New</div>
  <div class="rd" style="left:380.0px;top:152.0px"></div>
  <div class="lb" style="left:404px;top:151px;color:#7673dc">Accepted</div>
  <div class="rd" style="left:380.0px;top:186.0px"></div>
  <div class="lb" style="left:404px;top:185px;color:#8ea81f">In Progress</div>
  <div class="rd" style="left:380.0px;top:220.0px"></div>
  <div class="lb" style="left:404px;top:219px;color:#f0ae2a">Under Review</div>
  <div class="rd" style="left:380.0px;top:254.0px"></div>
  <div class="lb" style="left:404px;top:253px;color:#ead620">Reviewed</div>
  <div class="rd" style="left:380.0px;top:288.0px"></div>
  <div class="lb" style="left:404px;top:287px;color:#c0392b">Blocked</div>
  <div class="rd" style="left:380.0px;top:322.0px"></div>
  <div class="lb" style="left:404px;top:321px;color:#8e8e8e">Cancelled</div>
  <div class="rd" style="left:380.0px;top:356.0px"></div>
  <div class="lb" style="left:404px;top:355px">On Hold</div>
  <div class="rd" style="left:380.0px;top:390.0px"></div>
  <div class="lb" style="left:404px;top:389px;color:#2f9078">Complete</div>
  <div class="cb" style="left:562px;top:15px"><div class="abs" style="left:2px;top:5.500px;width:8px;height:1px;background:#333"></div></div>
  <div class="cb" style="left:562px;top:49px"></div>
  <div class="lb" style="left:586px;top:49px;color:#c0392b">High Priority</div>
  <div class="abs" style="left:528px;top:67px;width:182px;height:50px;border:4px solid #f7962d"></div>
  <div class="abs" style="left:562px;top:83px;width:14px;height:14px;background:#2b9ab8;border-radius:2px"><svg class="abs" style="left:2px;top:2.500px" width="10" height="9" viewBox="0 0 10 9" fill="none" stroke="#fff" stroke-width="1.800"><path d="M1.200 4.500l2.600 2.600 5-5.600"/></svg></div>
  <div class="lb" style="left:586px;top:83px;color:#f5b12e">Medium Priority</div>
  <div class="lb" style="left:677px;top:476px;color:#2d97b5;font-weight:bold">Reset</div>
</div>

</div>
</body>
</html>
